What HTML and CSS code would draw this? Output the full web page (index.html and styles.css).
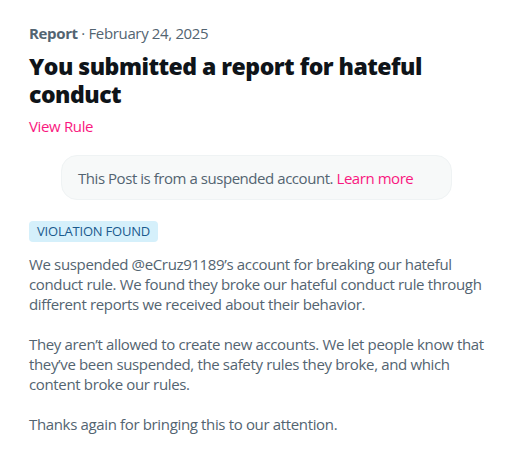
FILE: index.html
```html
<!DOCTYPE html>
<html>
<head>
<meta charset="utf-8">
<link rel="stylesheet" href="styles.css">
</head>
<body>
<main class="page">
  <div class="meta"><span class="meta-strong">Report</span> · February 24, 2025</div>
  <h1 class="title">You submitted a report for hateful conduct</h1>
  <a class="link rule-link" href="#">View Rule</a>
  <div class="notice"><span>This Post is from a suspended account. <a class="link" href="#">Learn more</a></span></div>
  <div class="badge">VIOLATION FOUND</div>
  <p class="para">We suspended @eCruz91189’s account for breaking our hateful conduct rule. We found they broke our hateful conduct rule through different reports we received about their behavior.</p>
  <p class="para">They aren’t allowed to create new accounts. We let people know that they’ve been suspended, the safety rules they broke, and which content broke our rules.</p>
  <p class="para">Thanks again for bringing this to our attention.</p>
</main>
</body>
</html>
```
FILE: styles.css
```css
html, body {
  margin: 0;
  padding: 0;
  background: #ffffff;
}
body {
  font-family: "Open Sans", "Noto Sans", sans-serif;
  color: #536471;
  font-size: 15px;
  line-height: 20px;
  letter-spacing: -0.35px;
}
.page {
  padding: 23px 0 0 29px;
  width: 462px;
  display: flex;
  flex-direction: column;
  align-items: flex-start;
}
.meta {
  font-size: 15px;
  line-height: 20px;
  color: #536471;
}
.meta-strong {
  font-weight: 700;
}
.title {
  margin: 9px 0 0 0;
  width: 420px;
  font-size: 23px;
  line-height: 28px;
  font-weight: 800;
  letter-spacing: -0.5px;
  color: #0f1419;
}
.link {
  color: #f91880;
  text-decoration: none;
}
.rule-link {
  margin-top: 8px;
}
.notice {
  margin: 19px 0 0 32px;
  width: 391px;
  box-sizing: border-box;
  height: 45px;
  padding: 0 16px;
  display: flex;
  align-items: center;
  background: #f7f9f9;
  border: 1px solid #eff3f4;
  border-radius: 16px;
  letter-spacing: -0.45px;
}
.badge {
  margin-top: 21px;
  padding: 0 8px;
  height: 21px;
  line-height: 21px;
  font-size: 13px;
  letter-spacing: -0.2px;
  color: #1a5a8e;
  background: #d5f0fb;
  border-radius: 4px;
}
.para {
  margin: 12px 0 0 0;
  width: 462px;
}
.para + .para {
  margin-top: 20px;
}
```
